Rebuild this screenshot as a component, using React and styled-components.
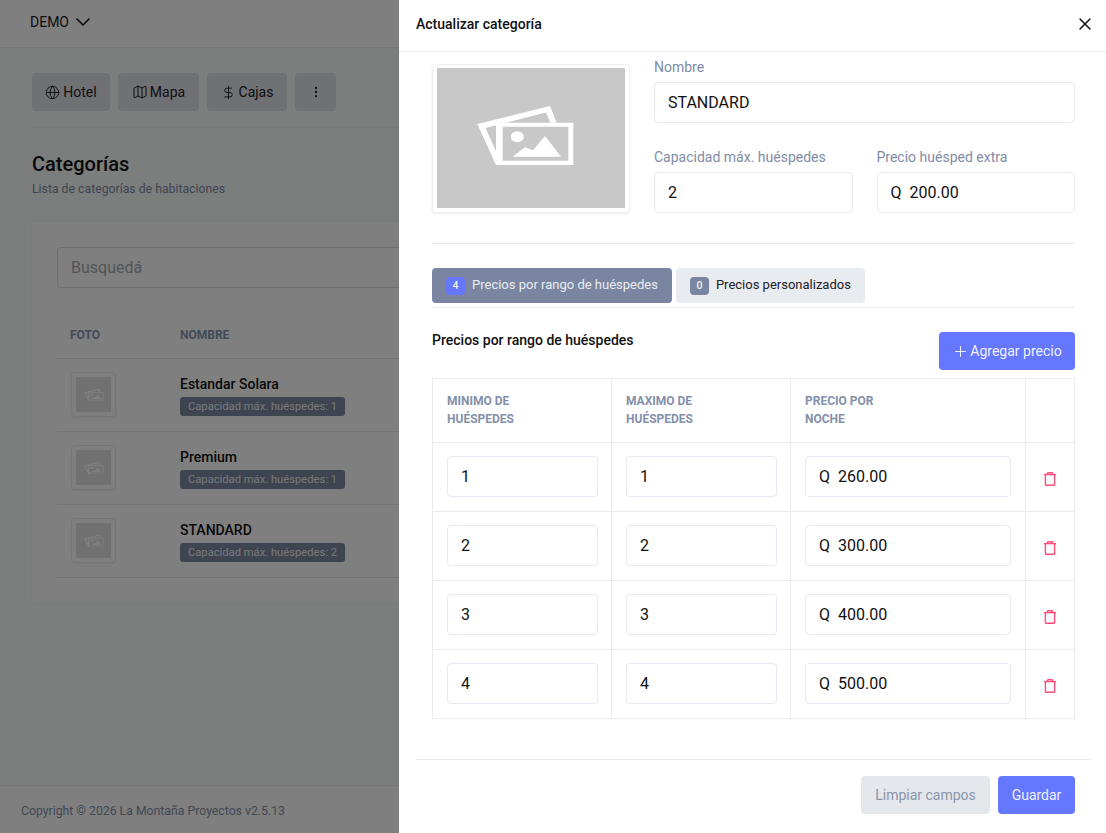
import React from 'react';
import styled, { createGlobalStyle } from 'styled-components';
import { Globe, Map as MapIcon, DollarSign, MoreVertical, ChevronDown, X, Plus } from 'lucide-react';

const GlobalStyle = createGlobalStyle`
    html, body {
        margin: 0;
        height: 100%;
        overflow: hidden;
    }
    body {
        font-family: Roboto, "Liberation Sans", sans-serif;
        color: #1c2128;
    }
    * {
        box-sizing: border-box;
    }
`;

const Page = styled.div`
    height: 833px;
    display: flex;
    flex-direction: column;
    background-color: #f8fbfb;
`;

const TopBar = styled.header`
    height: 48px;
    flex-shrink: 0;
    background-color: #fff;
    border-bottom: 1px solid #e8ebee;
    padding: 0 30px 3px;
    display: flex;
    align-items: center;
    gap: 2px;
    font-size: 14px;
`;

const Main = styled.main`
    flex: 1;
    padding: 25px 32px 0;
`;

const Toolbar = styled.div`
    display: flex;
    gap: 8px;
    padding-bottom: 16px;
    border-bottom: 1px solid #eef0f2;
`;

const ToolButton = styled.button`
    height: 38px;
    width: ${(props) => props.$width}px;
    border: 0;
    border-radius: 4px;
    background-color: #dfe2e8;
    color: #1c2128;
    font: 14px Roboto, sans-serif;
    display: flex;
    align-items: center;
    justify-content: center;
    gap: ${(props) => props.$gap}px;
    padding: 0;
`;

const Title = styled.h1`
    margin: 25px 0 0;
    font-size: 20px;
    line-height: 22px;
    font-weight: 500;
    color: #111;
`;

const Subtitle = styled.p`
    margin: 6px 0 0;
    font-size: 12.25px;
    line-height: 16px;
    color: #7f8ba5;
`;

const Card = styled.section`
    margin-top: 25px;
    background-color: #fff;
    box-shadow: 0 0 2px rgba(0, 0, 0, 0.05);
    padding: 25px;
    height: 381px;
`;

const SearchInput = styled.div`
    height: 41px;
    border: 1px solid #dbdfea;
    border-radius: 4px;
    padding: 0 13px;
    display: flex;
    align-items: center;
    font-size: 16px;
    color: #a4a8b0;
    background-color: #fff;
`;

const ListHead = styled.div`
    display: flex;
    height: 71px;
    align-items: flex-start;
    border-bottom: 1px solid #e5e9f2;
    padding-top: 40px;
    font-size: 12px;
    line-height: 14px;
    font-weight: 700;
    color: #8593b2;
`;

const PhotoCol = styled.div`
    width: 123px;
    padding-left: ${(props) => props.$inset}px;
    flex-shrink: 0;
`;

const ListRow = styled.div`
    display: flex;
    height: 73px;
    align-items: center;
    border-bottom: 1px solid #e5e9f2;
`;

const Thumb = styled.div`
    width: 45px;
    height: 45px;
    margin-top: -1px;
    padding: 4px;
    border: 1px solid #e8ebee;
    border-radius: 4px;
    background-color: #fff;
    box-shadow: 0 1px 2px rgba(0, 0, 0, 0.05);
`;

const ThumbImage = styled.div`
    width: 100%;
    height: 100%;
    background-color: #e2e2e2;
    display: flex;
    align-items: center;
    justify-content: center;
`;

const RowName = styled.div`
    margin-top: 1px;
    font-size: 14px;
    line-height: 16px;
    font-weight: 500;
    color: #111;
`;

const CapacityBadge = styled.span`
    display: inline-block;
    margin-top: 5px;
    height: 19px;
    line-height: 19px;
    padding: 0 8px;
    border-radius: 3px;
    font-size: 11.2px;
    color: #eceef2;
    background-color: #7c8aa3;
`;

const PageFooter = styled.footer`
    height: 48px;
    flex-shrink: 0;
    background-color: #fff;
    border-top: 1px solid #e8ebee;
    padding: 2px 21px 0;
    display: flex;
    align-items: center;
    font-size: 12.25px;
    color: #8490a8;
`;

const Overlay = styled.div`
    position: fixed;
    inset: 0;
    background-color: rgba(0, 0, 0, 0.5);
`;

const Drawer = styled.aside`
    position: fixed;
    top: 0;
    right: 0;
    bottom: 0;
    width: 707px;
    background-color: #fff;
    display: flex;
    flex-direction: column;
`;

const DrawerHeader = styled.div`
    height: 52px;
    flex-shrink: 0;
    border-bottom: 1px solid #e9ecef;
    padding: 0 11px 3px 17px;
    display: flex;
    align-items: center;
    justify-content: space-between;
    font-size: 14px;
    font-weight: 500;
    color: #111;
`;

const DrawerBody = styled.div`
    flex: 1;
    padding: 12px 31px 0 33px;
`;

const TopForm = styled.div`
    display: flex;
    gap: 24px;
    padding-bottom: 30px;
    border-bottom: 1px solid #e5e7ea;
`;

const PhotoCard = styled.div`
    width: 198px;
    height: 149px;
    flex-shrink: 0;
    padding: 3px 4px 4px;
    border: 1px solid #eceef2;
    border-radius: 4px;
    box-shadow: 0 1px 3px rgba(0, 0, 0, 0.08);
`;

const PhotoImage = styled.div`
    width: 100%;
    height: 100%;
    padding: 0 11px 6px 0;
    background-color: #c8c8c8;
    display: flex;
    align-items: center;
    justify-content: center;
`;

const Fields = styled.div`
    flex: 1;
    display: flex;
    flex-direction: column;
    gap: 17px;
`;

const FieldRow = styled.div`
    display: flex;
    gap: 24px;
`;

const Field = styled.label`
    flex: 1;
    display: flex;
    flex-direction: column;
    min-width: 0;
`;

const FieldLabel = styled.span`
    font-size: 14px;
    line-height: 18px;
    height: 18px;
    margin-top: -6px;
    margin-bottom: 6px;
    color: #7f8ba5;
`;

const TextInput = styled.input`
    width: 100%;
    height: 41px;
    padding: 0 13px;
    border: 1px solid #e5e9f2;
    border-radius: 4px;
    background-color: #fff;
    font: 16px Roboto, sans-serif;
    color: #111;
    outline: none;
`;

const Tabs = styled.div`
    margin-top: 24px;
    display: flex;
    gap: 4px;
    padding-bottom: 4px;
    border-bottom: 1px solid #e9ecef;
`;

const Tab = styled.div`
    height: 35px;
    padding: 0 14px;
    border-radius: 4px;
    display: flex;
    align-items: center;
    gap: 7px;
    font-size: 13px;
    background-color: ${(props) => (props.$active ? '#7a86a1' : '#e8ebef')};
    color: ${(props) => (props.$active ? '#e9ecf2' : '#1c2128')};
`;

const TabLabel = styled.span`
    padding-bottom: 2px;
`;

const TabCount = styled.span`
    width: 19px;
    height: 18px;
    border-radius: 4px;
    font-size: 10.5px;
    font-weight: 500;
    display: flex;
    align-items: center;
    justify-content: center;
    color: #f0f2f6;
    background-color: ${(props) => (props.$active ? '#6576ff' : '#7a86a1')};
`;

const SectionHead = styled.div`
    margin-top: 24px;
    display: flex;
    justify-content: space-between;
    align-items: flex-start;
`;

const SectionTitle = styled.h2`
    margin: -1px 0 0;
    font-size: 14px;
    line-height: 18px;
    font-weight: 500;
    color: #111;
`;

const PrimaryButton = styled.button`
    height: 38px;
    width: ${(props) => props.$width}px;
    padding: 0;
    border: 0;
    border-radius: 4px;
    background-color: #6576ff;
    color: #eef0ff;
    font: 14px Roboto, sans-serif;
    display: flex;
    align-items: center;
    justify-content: center;
    gap: 1px;
`;

const PriceTable = styled.table`
    margin-top: 8px;
    width: 642px;
    border-collapse: collapse;
    table-layout: fixed;
`;

const HeadCell = styled.th`
    width: ${(props) => props.$width}px;
    height: 64px;
    padding: 13px 14px 0;
    border: 1px solid #e9ecef;
    vertical-align: top;
    text-align: left;
    font-size: 12px;
    line-height: 18px;
    font-weight: 700;
    color: #8490aa;
`;

const HeadText = styled.span`
    display: block;
    max-width: 90px;
`;

const BodyRow = styled.tr`
    height: 69px;
`;

const BodyCell = styled.td`
    padding: 0 ${(props) => (props.$tight ? 13 : 14)}px 1px 14px;
    border: 1px solid #e9ecef;
`;

const TrashCell = styled.td`
    padding: 3px 0 0;
    border: 1px solid #e9ecef;
    text-align: center;
    line-height: 0;
`;

const DrawerFooter = styled.div`
    height: 74px;
    flex-shrink: 0;
    margin: 0 15px 0 17px;
    padding: 16px 16px 0 0;
    border-top: 1px solid #e5e7ea;
    display: flex;
    justify-content: flex-end;
    gap: 8px;
`;

const MutedButton = styled.button`
    height: 38px;
    width: 129px;
    padding: 0;
    border: 0;
    border-radius: 4px;
    background-color: #e4e7ec;
    color: #8a95ab;
    font: 14px Roboto, sans-serif;
`;

function PhotoIcon({ width, height }) {
    return (
        <svg width={width} height={height} viewBox="0 0 99 62" fill="#fff">
            <path d="M1.3 20L74 2L80.7 18.7H74.5L70 8.5L9.5 24L24 56V61H20Z" />
            <path fillRule="evenodd" d="M20 18.7H97.3V61H20ZM26.7 22.7V56.7H92.3V22.7Z" />
            <path d="M36.5 52.7L49 43.2L57 46.2L69 32L85 52.7Z" />
            <ellipse cx="41.3" cy="32.7" rx="6.5" ry="5.5" />
        </svg>
    );
}

function TrashIcon() {
    return (
        <svg width="12" height="14" viewBox="0 0 12 14" fill="none" stroke="#ff4d7a" strokeWidth="1.4">
            <path d="M0 2.6H12" />
            <path d="M1.4 2.6V12.4C1.4 12.9 1.7 13.2 2.2 13.2H9.8C10.3 13.2 10.6 12.9 10.6 12.4V2.6" />
            <path d="M3.4 2.6V1.4C3.4 1 3.7 0.7 4 0.7H8C8.3 0.7 8.6 1 8.6 1.4V2.6" />
        </svg>
    );
}

const categories = [
    { name: 'Estandar Solara', capacity: 1 },
    { name: 'Premium', capacity: 1 },
    { name: 'STANDARD', capacity: 2 },
];

const prices = [
    { min: 1, max: 1, price: 'Q  260.00' },
    { min: 2, max: 2, price: 'Q  300.00' },
    { min: 3, max: 3, price: 'Q  400.00' },
    { min: 4, max: 4, price: 'Q  500.00' },
];

function App() {
    return (
        <>
            <GlobalStyle />
            <Page>
                <TopBar>
                    DEMO
                    <ChevronDown size={24} strokeWidth={1.7} />
                </TopBar>
                <Main>
                    <Toolbar>
                        <ToolButton $width={78} $gap={3}>
                            <Globe size={15} strokeWidth={1.5} /> Hotel
                        </ToolButton>
                        <ToolButton $width={81} $gap={2}>
                            <MapIcon size={16} strokeWidth={1.5} /> Mapa
                        </ToolButton>
                        <ToolButton $width={80} $gap={3}>
                            <DollarSign size={15} strokeWidth={1.5} /> Cajas
                        </ToolButton>
                        <ToolButton $width={41} $gap={0}>
                            <MoreVertical size={14} strokeWidth={2} />
                        </ToolButton>
                    </Toolbar>
                    <Title>Categorías</Title>
                    <Subtitle>Lista de categorías de habitaciones</Subtitle>
                    <Card>
                        <SearchInput>Busquedá</SearchInput>
                        <ListHead>
                            <PhotoCol $inset={13}>FOTO</PhotoCol>
                            <div>NOMBRE</div>
                        </ListHead>
                        {categories.map((category) => (
                            <ListRow key={category.name}>
                                <PhotoCol $inset={14}>
                                    <Thumb>
                                        <ThumbImage>
                                            <PhotoIcon width={20} height={13} />
                                        </ThumbImage>
                                    </Thumb>
                                </PhotoCol>
                                <div>
                                    <RowName>{category.name}</RowName>
                                    <CapacityBadge>Capacidad máx. huéspedes: {category.capacity}</CapacityBadge>
                                </div>
                            </ListRow>
                        ))}
                    </Card>
                </Main>
                <PageFooter>Copyright © 2026 La Montaña Proyectos v2.5.13</PageFooter>
            </Page>
            <Overlay />
            <Drawer>
                <DrawerHeader>
                    Actualizar categoría
                    <X size={20} strokeWidth={1.8} color="#111" />
                </DrawerHeader>
                <DrawerBody>
                    <TopForm>
                        <PhotoCard>
                            <PhotoImage>
                                <PhotoIcon width={99} height={62} />
                            </PhotoImage>
                        </PhotoCard>
                        <Fields>
                            <Field>
                                <FieldLabel>Nombre</FieldLabel>
                                <TextInput defaultValue="STANDARD" />
                            </Field>
                            <FieldRow>
                                <Field>
                                    <FieldLabel>Capacidad máx. huéspedes</FieldLabel>
                                    <TextInput defaultValue="2" />
                                </Field>
                                <Field>
                                    <FieldLabel>Precio huésped extra</FieldLabel>
                                    <TextInput defaultValue="Q  200.00" />
                                </Field>
                            </FieldRow>
                        </Fields>
                    </TopForm>
                    <Tabs>
                        <Tab $active>
                            <TabCount $active>4</TabCount>
                            <TabLabel>Precios por rango de huéspedes</TabLabel>
                        </Tab>
                        <Tab>
                            <TabCount>0</TabCount>
                            <TabLabel>Precios personalizados</TabLabel>
                        </Tab>
                    </Tabs>
                    <SectionHead>
                        <SectionTitle>Precios por rango de huéspedes</SectionTitle>
                        <PrimaryButton $width={136}>
                            <Plus size={17} strokeWidth={1.3} color="#fff" /> Agregar precio
                        </PrimaryButton>
                    </SectionHead>
                    <PriceTable>
                        <thead>
                            <tr>
                                <HeadCell $width={179}><HeadText>MINIMO DE HUÉSPEDES</HeadText></HeadCell>
                                <HeadCell $width={179}><HeadText>MAXIMO DE HUÉSPEDES</HeadText></HeadCell>
                                <HeadCell $width={235}><HeadText>PRECIO POR NOCHE</HeadText></HeadCell>
                                <HeadCell $width={49} />
                            </tr>
                        </thead>
                        <tbody>
                            {prices.map((row) => (
                                <BodyRow key={row.min}>
                                    <BodyCell $tight><TextInput defaultValue={row.min} /></BodyCell>
                                    <BodyCell $tight><TextInput defaultValue={row.max} /></BodyCell>
                                    <BodyCell><TextInput defaultValue={row.price} /></BodyCell>
                                    <TrashCell><TrashIcon /></TrashCell>
                                </BodyRow>
                            ))}
                        </tbody>
                    </PriceTable>
                </DrawerBody>
                <DrawerFooter>
                    <MutedButton>Limpiar campos</MutedButton>
                    <PrimaryButton $width={77}>Guardar</PrimaryButton>
                </DrawerFooter>
            </Drawer>
        </>
    );
}

export default App;
